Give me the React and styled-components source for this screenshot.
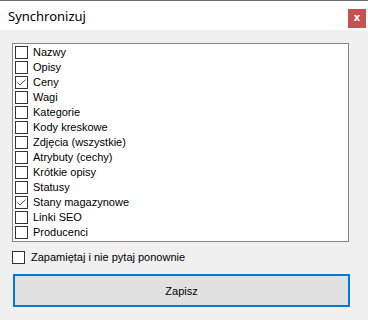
import styled, { createGlobalStyle } from "styled-components";

const GlobalStyle = createGlobalStyle`
  *, *::before, *::after { box-sizing: border-box; }
  html, body { margin: 0; padding: 0; }
  body {
    background: #f0f0f0;
    font-family: "Liberation Sans", Arial, sans-serif;
    font-size: 11px;
    color: #000;
  }
`;

const ITEMS = [
  { label: "Nazwy", checked: false },
  { label: "Opisy", checked: false },
  { label: "Ceny", checked: true },
  { label: "Wagi", checked: false },
  { label: "Kategorie", checked: false },
  { label: "Kody kreskowe", checked: false },
  { label: "Zdjęcia (wszystkie)", checked: false },
  { label: "Atrybuty (cechy)", checked: false },
  { label: "Krótkie opisy", checked: false },
  { label: "Statusy", checked: false },
  { label: "Stany magazynowe", checked: true },
  { label: "Linki SEO", checked: false },
  { label: "Producenci", checked: false },
];

const Window = styled.div`
  width: 368px;
  height: 320px;
  display: flex;
  flex-direction: column;
  background: #f0f0f0;
  overflow: hidden;
`;

const TitleBar = styled.div`
  height: 30px;
  flex-shrink: 0;
  border-top: 1px solid #6e6e6e;
  background: #fff;
  display: flex;
  align-items: center;
  justify-content: space-between;
  padding: 0 2px 0 8px;
`;

const Title = styled.span`
  font-family: "Noto Sans", "Liberation Sans", sans-serif;
  font-size: 13px;
  margin-top: 1px;
`;

const CloseButton = styled.div`
  width: 18px;
  height: 19px;
  background: #c75050;
  color: #fff;
  font-weight: bold;
  font-size: 10px;
  line-height: 18px;
  text-align: center;
  margin-top: 5px;
  font-family: "DejaVu Sans", sans-serif;
`;

const Body = styled.div`
  padding: 13px 19px 0 12px;
  display: flex;
  flex-direction: column;
`;

const ListBox = styled.div`
  height: 199px;
  border: 1px solid #828790;
  background: #fff;
  padding: 1px 2px;
  display: flex;
  flex-direction: column;
`;

const Row = styled.label`
  height: 15px;
  display: flex;
  align-items: center;
  gap: 5px;
  white-space: nowrap;
`;

const Box = styled.span`
  width: 13px;
  height: 13px;
  border: 1px solid #333;
  background: #fff;
  flex-shrink: 0;
  display: flex;
  align-items: center;
  justify-content: center;
`;

const RowText = styled.span`
  line-height: 15px;
`;

const RememberRow = styled(Row)`
  margin-top: 8px;
  gap: 6px;
`;

const SaveButton = styled.button`
  margin-top: 9px;
  margin-left: 1px;
  height: 33px;
  width: 337px;
  border: 2px solid #0078d7;
  background: #e1e1e1;
  font-family: inherit;
  font-size: 11px;
  color: #000;
  padding: 0;
`;

const Check = () => (
  <svg width="11" height="11" viewBox="0 0 11 11">
    <path d="M1.5 5.5 L4 8 L9.5 2.5" fill="none" stroke="#555" strokeWidth="1" />
  </svg>
);

const CheckItem = ({ label, checked }) => (
  <Row>
    <Box>{checked && <Check />}</Box>
    <RowText>{label}</RowText>
  </Row>
);

const App = () => (
  <>
    <GlobalStyle />
    <Window>
      <TitleBar>
        <Title>Synchronizuj</Title>
        <CloseButton>x</CloseButton>
      </TitleBar>
      <Body>
        <ListBox>
          {ITEMS.map((it) => (
            <CheckItem key={it.label} {...it} />
          ))}
        </ListBox>
        <RememberRow>
          <Box />
          <RowText>Zapamiętaj i nie pytaj ponownie</RowText>
        </RememberRow>
        <SaveButton>Zapisz</SaveButton>
      </Body>
    </Window>
  </>
);

export default App;
